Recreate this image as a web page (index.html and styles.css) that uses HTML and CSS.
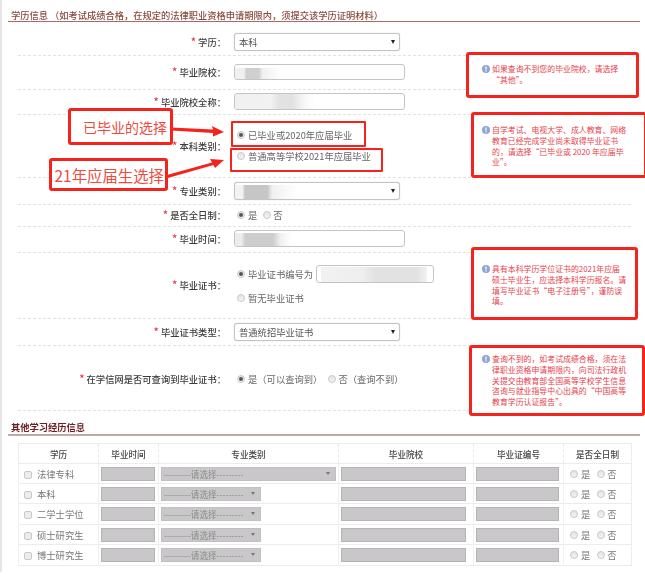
FILE: index.html
```html
<!DOCTYPE html>
<html lang="zh-CN">
<head>
<meta charset="utf-8">
<title>学历信息</title>
<link rel="stylesheet" href="styles.css">
</head>
<body>
<main class="sheet">
  <h2 class="section-title first">学历信息 （如考试成绩合格，在规定的法律职业资格申请期限内，须提交该学历证明材料）</h2>

  <div class="row r-1">
    <div class="label"><i>*</i> 学历：</div>
    <div class="select w-166"><span>本科</span></div>
  </div>
  <div class="row r-2">
    <div class="label"><i>*</i> 毕业院校：</div>
    <div class="input w-171 h-16"><b class="mosaic m-school"></b></div>
  </div>
  <div class="row r-3">
    <div class="label"><i>*</i> 毕业院校全称：</div>
    <div class="input w-171 h-17"><b class="mosaic m-full"></b></div>
  </div>
  <div class="row r-4">
    <div class="label"><i>*</i> 本科类别：</div>
    <div class="stack gap-9">
      <div class="opt"><span class="radio on"></span>已毕业或2020年应届毕业</div>
      <div class="opt"><span class="radio"></span>普通高等学校2021年应届毕业</div>
    </div>
  </div>
  <div class="row r-5">
    <div class="label"><i>*</i> 专业类别：</div>
    <div class="select w-166"><b class="mosaic m-major"></b></div>
  </div>
  <div class="row r-6">
    <div class="label"><i>*</i> 是否全日制：</div>
    <div class="opt"><span class="radio on"></span>是<span class="radio next"></span>否</div>
  </div>
  <div class="row r-7">
    <div class="label"><i>*</i> 毕业时间：</div>
    <div class="input w-171 h-17"><b class="mosaic m-date"></b></div>
  </div>
  <div class="row r-8">
    <div class="label"><i>*</i> 毕业证书：</div>
    <div class="stack gap-9">
      <div class="opt"><span class="radio on"></span>毕业证书编号为<div class="input w-118 h-18 cert"><b class="mosaic m-cert"></b></div></div>
      <div class="opt"><span class="radio"></span>暂无毕业证书</div>
    </div>
  </div>
  <div class="row r-9">
    <div class="label"><i>*</i> 毕业证书类型：</div>
    <div class="select w-166"><span>普通统招毕业证书</span></div>
  </div>
  <div class="row r-10">
    <div class="label"><i>*</i> 在学信网是否可查询到毕业证书：</div>
    <div class="opt"><span class="radio on"></span>是（可以查询到）<span class="radio next-wide"></span>否（查询不到）</div>
  </div>

  <h2 class="section-title second">其他学习经历信息</h2>

  <table class="history">
    <colgroup>
      <col class="c1"><col class="c2"><col class="c3"><col class="c4"><col class="c5"><col class="c6">
    </colgroup>
    <thead>
      <tr><th>学历</th><th>毕业时间</th><th>专业类别</th><th>毕业院校</th><th>毕业证编号</th><th>是否全日制</th></tr>
    </thead>
    <tbody>
      <tr>
        <td class="kind"><span class="check"></span>法律专科</td>
        <td><div class="gray"></div></td>
        <td><div class="gray-select wide">---------请选择---------</div></td>
        <td><div class="gray"></div></td>
        <td><div class="gray"></div></td>
        <td class="yn"><span class="radio"></span>是<span class="radio next-yn"></span>否</td>
      </tr>
      <tr>
        <td class="kind"><span class="check"></span>本科</td>
        <td><div class="gray"></div></td>
        <td><div class="gray-select">---------请选择---------</div></td>
        <td><div class="gray"></div></td>
        <td><div class="gray"></div></td>
        <td class="yn"><span class="radio"></span>是<span class="radio next-yn"></span>否</td>
      </tr>
      <tr>
        <td class="kind"><span class="check"></span>二学士学位</td>
        <td><div class="gray"></div></td>
        <td><div class="gray-select">---------请选择---------</div></td>
        <td><div class="gray"></div></td>
        <td><div class="gray"></div></td>
        <td class="yn"><span class="radio"></span>是<span class="radio next-yn"></span>否</td>
      </tr>
      <tr>
        <td class="kind"><span class="check"></span>硕士研究生</td>
        <td><div class="gray"></div></td>
        <td><div class="gray-select">---------请选择---------</div></td>
        <td><div class="gray"></div></td>
        <td><div class="gray"></div></td>
        <td class="yn"><span class="radio"></span>是<span class="radio next-yn"></span>否</td>
      </tr>
      <tr>
        <td class="kind"><span class="check"></span>博士研究生</td>
        <td><div class="gray"></div></td>
        <td><div class="gray-select">---------请选择---------</div></td>
        <td><div class="gray"></div></td>
        <td><div class="gray"></div></td>
        <td class="yn"><span class="radio"></span>是<span class="radio next-yn"></span>否</td>
      </tr>
    </tbody>
  </table>

  <!-- Red annotations drawn over the form -->
  <div class="note note-grad">已毕业的选择</div>
  <div class="note note-21">21年应届生选择</div>
  <div class="mark mark-a"></div>
  <div class="mark mark-b"></div>
  <svg class="arrows" width="645" height="586" viewBox="0 0 645 586" aria-hidden="true">
    <polygon points="171,127.5 213,129.5 212,126 224,132 213,136.5 213,133 171,130.5"/>
    <polygon points="165,175.5 212,162.5 210,159 224,160 215,168 213.5,165 166,178.5"/>
  </svg>

  <aside class="tip tip-1">
    <svg class="info" width="8" height="8" viewBox="0 0 8 8"><circle cx="4" cy="4" r="4"/><rect x="3.4" y="1.5" width="1.2" height="3.2"/><rect x="3.4" y="5.3" width="1.2" height="1.2"/></svg>
    <p>如果查询不到您的毕业院校，请选择<br>“其他”。</p>
  </aside>
  <aside class="tip tip-2">
    <svg class="info" width="8" height="8" viewBox="0 0 8 8"><circle cx="4" cy="4" r="4"/><rect x="3.4" y="1.5" width="1.2" height="3.2"/><rect x="3.4" y="5.3" width="1.2" height="1.2"/></svg>
    <p>自学考试、电视大学、成人教育、网络<br>教育已经完成学业尚未取得毕业证书<br>的，请选择“已毕业或 2020 年应届毕<br>业”。</p>
  </aside>
  <aside class="tip tip-3">
    <svg class="info" width="8" height="8" viewBox="0 0 8 8"><circle cx="4" cy="4" r="4"/><rect x="3.4" y="1.5" width="1.2" height="3.2"/><rect x="3.4" y="5.3" width="1.2" height="1.2"/></svg>
    <p>具有本科学历学位证书的2021年应届<br>硕士毕业生，应选择本科学历报名。请<br>填写毕业证书“电子注册号”，谨防误<br>填。</p>
  </aside>
  <aside class="tip tip-4">
    <svg class="info" width="8" height="8" viewBox="0 0 8 8"><circle cx="4" cy="4" r="4"/><rect x="3.4" y="1.5" width="1.2" height="3.2"/><rect x="3.4" y="5.3" width="1.2" height="1.2"/></svg>
    <p>查询不到的，如考试成绩合格，须在法<br>律职业资格申请期限内，向司法行政机<br>关提交由教育部全国高等学校学生信息<br>咨询与就业指导中心出具的“中国高等<br>教育学历认证报告”。</p>
  </aside>
</main>
</body>
</html>
```

FILE: styles.css
```css
* { box-sizing: border-box; }

html, body {
  margin: 0;
  padding: 0;
  background: #fff;
}

body {
  width: 645px;
  height: 586px;
  overflow: hidden;
  font-family: "Noto Sans CJK SC", "Liberation Sans", sans-serif;
  font-size: 9.3px;
  line-height: 12px;
  color: #555;
}

.sheet {
  position: relative;
  width: 645px;
  height: 572px;
  border-left: 2px solid #e6e6e6;
  filter: blur(0.35px);
}

.section-title {
  margin: 0 0 0 6px;
  width: 632px;
  font-size: 9.25px;
  line-height: 12px;
  font-weight: 500;
}

.section-title.first {
  padding: 9px 0 0 3px;
  height: 22px;
  color: #8a4a3c;
  border-bottom: 1px solid #a86a66;
}

.section-title.second {
  padding: 10px 0 1px 3px;
  height: 25px;
  color: #6e1f26;
  font-weight: 700;
  border-bottom: 2px solid #c8a6a8;
}

/* form rows */
.row {
  display: grid;
  grid-template-columns: 208px 1fr;
  column-gap: 8px;
  align-items: center;
  margin-left: 16px;
  width: 613px;
  border-bottom: 1px dashed #e2e2e2;
}

.r-1 { padding: 11px 0 4px; }
.r-2 { padding: 8px 0 9px; }
.r-3 { padding: 3px 0 4px; }
.r-4 { padding: 14px 0 15px; }
.r-5 { padding: 4px 0; }
.r-6 { padding: 4px 0 5px; }
.r-7 { padding: 3px 0 5px; }
.r-8 { padding: 12px 0 14px; }
.r-9 { padding: 4px 0; }
.r-10 { padding: 27px 0 25px; }

.label {
  height: 12px;
  text-align: right;
  color: #3c3c3c;
  font-weight: 500;
  white-space: nowrap;
}

.label i {
  color: #e8354a;
  font-style: normal;
  font-size: 11px;
  line-height: 0;
}

.select, .input {
  position: relative;
  overflow: hidden;
  background: #fff;
  border: 1px solid #c4c4c4;
  border-radius: 3px;
}

.select {
  height: 18px;
  padding-left: 4px;
  line-height: 17px;
  color: #555;
  box-shadow: 0 0 1px #bbb;
}

.select::after {
  content: "";
  position: absolute;
  right: 4px;
  top: 6px;
  border-left: 2.5px solid transparent;
  border-right: 2.5px solid transparent;
  border-top: 4px solid #222;
}

.w-166 { width: 166px; }
.w-171 { width: 171px; }
.w-118 { width: 118px; }
.h-16 { height: 16px; }
.h-17 { height: 17px; }
.h-18 { height: 18px; }

.mosaic {
  display: block;
  position: absolute;
}

.m-school {
  left: 0; top: 3px; width: 46px; height: 12px;
  background: linear-gradient(90deg, #f0f0f0 0, #f0f0f0 20%, #cfcfcf 24%, #cfcfcf 52%, #f0f0f0 60%, #fff 100%);
}
.m-full {
  left: 0; top: 0; width: 80px; height: 16px;
  background: linear-gradient(90deg, #f0f0f0 0, #f2f2f2 45%, #e2e2e2 55%, #e2e2e2 72%, #f6f6f6 85%, #fff 100%);
}
.m-major {
  left: 0; top: 2px; width: 62px; height: 14px;
  background: linear-gradient(90deg, #f2f2f2 0, #f2f2f2 12%, #c6c6c6 16%, #c6c6c6 52%, #f0f0f0 60%, #fff 100%);
}
.m-date {
  left: 0; top: 2px; width: 56px; height: 13px;
  background: linear-gradient(90deg, #ececec 0, #ececec 12%, #cdcdcd 18%, #cdcdcd 68%, #eee 80%, #fff 100%);
}
.m-cert {
  left: 4px; top: 1px; width: 106px; height: 15px;
  background: linear-gradient(90deg, #f2f2f2 0, #eeeeee 40%, #e2e2e2 50%, #e2e2e2 90%, #f2f2f2 100%);
}

.stack {
  display: flex;
  flex-direction: column;
  align-items: flex-start;
}

.gap-9 { gap: 9px; }

.opt {
  display: flex;
  align-items: center;
  padding-left: 3px;
  color: #666;
  white-space: nowrap;
}

.radio {
  flex: none;
  display: inline-block;
  position: relative;
  width: 8px;
  height: 8px;
  margin-right: 3px;
  border: 1px solid #c8c8c8;
  border-radius: 50%;
  background: linear-gradient(#e4e4e4, #f4f4f4);
}

.radio.on::after {
  content: "";
  position: absolute;
  left: 1px;
  top: 1px;
  width: 4px;
  height: 4px;
  border-radius: 50%;
  background: #555;
}

.radio.next { margin-left: 6px; margin-right: 2px; }
.radio.next-wide { margin-left: 6px; margin-right: 2px; }
.radio.next-yn { margin-left: 7px; margin-right: 2px; }

.cert { margin-left: 3px; }

/* history table */
.history {
  margin: 7px 0 0 16px;
  width: 613px;
  border-collapse: collapse;
  table-layout: fixed;
  border: 1px solid #ececec;
}

.c1 { width: 80px; }
.c2 { width: 60px; }
.c3 { width: 180px; }
.c4 { width: 135px; }
.c5 { width: 90px; }
.c6 { width: 68px; }

.history th {
  height: 20px;
  padding: 0;
  font-size: 8.6px;
  font-weight: 500;
  color: #444;
  text-align: center;
  border-bottom: 1px solid #ececec;
  border-left: 1px dashed #e8e8e8;
}

.history td {
  height: 20px;
  padding: 0 2px;
  border-top: 1px solid #ececec;
  border-left: 1px solid #f0f0f0;
  font-size: 9.3px;
  line-height: 12px;
  color: #666;
}

.history tbody tr:nth-child(3) td,
.history tbody tr:nth-child(5) td {
  height: 21px;
}

.history td.kind {
  padding-left: 5px;
  white-space: nowrap;
  color: #777;
}

.history td.yn {
  padding-left: 6px;
  white-space: nowrap;
  color: #777;
}

.check {
  display: inline-block;
  vertical-align: -1px;
  width: 8px;
  height: 8px;
  margin-right: 5px;
  border: 1px solid #c8c8c8;
  border-radius: 2px;
  background: #ececec;
}

.gray {
  height: 14px;
  background: #c9c7c9;
  border: 1px solid #b4b4b4;
}

.history td:nth-child(2) .gray { width: 54px; }
.history td:nth-child(4) .gray { width: 125px; }
.history td:nth-child(5) .gray { width: 83px; }

.gray-select {
  position: relative;
  width: 100px;
  height: 14px;
  padding-left: 2px;
  line-height: 13px;
  overflow: hidden;
  white-space: nowrap;
  font-size: 8.6px;
  color: #8c8c8c;
  background: #c9c7c9;
  border: 1px solid #c0c0c0;
}

.gray-select.wide { width: 175px; }

.gray-select::after {
  content: "";
  position: absolute;
  right: 5px;
  top: 4px;
  border-left: 2px solid transparent;
  border-right: 2px solid transparent;
  border-top: 3px solid #777;
}

/* annotations over the form */
.note {
  position: absolute;
  display: flex;
  align-items: center;
  justify-content: flex-end;
  background: #fff;
  border: 3px solid #f5231c;
  border-radius: 3px;
  color: #ee4b3e;
  white-space: nowrap;
}

.note-grad {
  left: 66px; top: 108px;
  width: 105px; height: 37px;
  padding-right: 3px;
  font-size: 14px;
}

.note-21 {
  left: 47px; top: 158px;
  width: 119px; height: 33px;
  padding-right: 1px;
  font-size: 15.4px;
}

.mark {
  position: absolute;
  border: 2px solid #f5231c;
  border-radius: 1px;
}

.mark-a { left: 229px; top: 121px; width: 135px; height: 26px; }
.mark-b { left: 228px; top: 148px; width: 153px; height: 24px; }

.arrows {
  position: absolute;
  left: -2px;
  top: 0;
  pointer-events: none;
}

.arrows polygon { fill: #f5231c; }

.tip {
  position: absolute;
  display: flex;
  align-items: flex-start;
  gap: 2px;
  background: #fff;
  border: 3px solid #f5231c;
  border-radius: 3px;
  color: #e8404a;
  font-size: 7.9px;
  line-height: 10.8px;
}

.tip p {
  margin: 0;
  white-space: nowrap;
}

.info {
  flex: none;
  margin-top: 1px;
}

.info circle { fill: #8fa5d6; }
.info rect { fill: #fff; }

.tip-1 { left: 464px; top: 52px; width: 173px; height: 46px; padding: 9px 0 0 13px; }
.tip-2 { left: 469px; top: 112px; width: 176px; height: 66px; padding: 10px 0 0 8px; }
.tip-3 { left: 469px; top: 247px; width: 167px; height: 73px; padding: 14px 0 0 8px; }
.tip-4 { left: 467px; top: 345px; width: 176px; height: 71px; padding: 6px 0 0 10px; }
```
